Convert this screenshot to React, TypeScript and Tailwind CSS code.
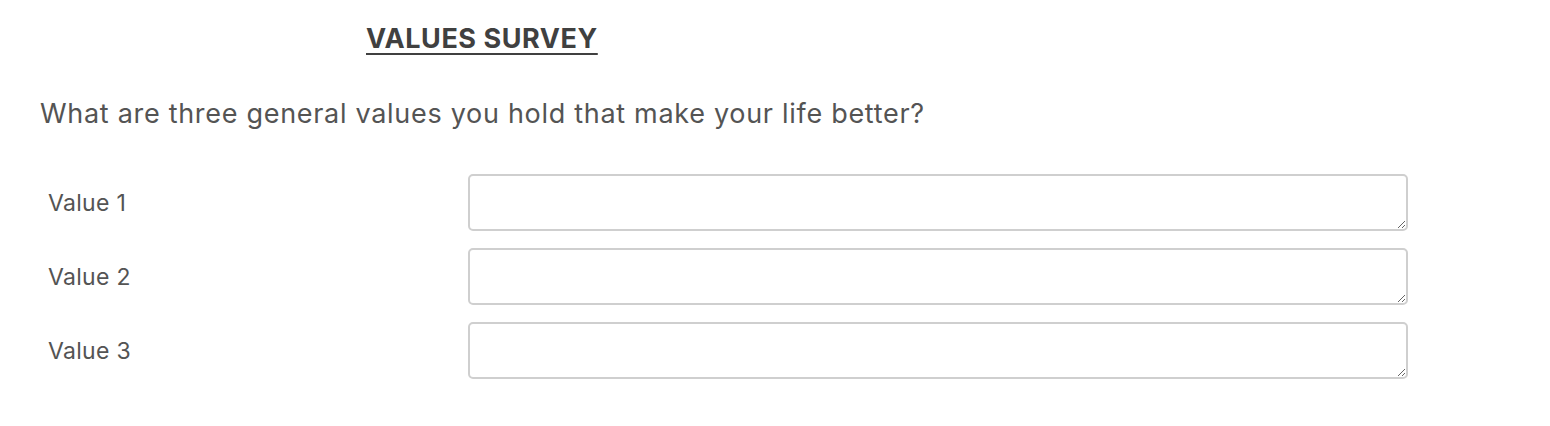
export default function App() {
  const rows = ["Value 1", "Value 2", "Value 3"];
  return (
    <div className="min-h-screen bg-white font-[family-name:Inter,sans-serif] text-[#545454]">
      <div className="pt-[22px]">
        {/* Title */}
        <h1 className="ml-[366px] inline-block text-[27px] font-bold leading-[34px] tracking-[0.55px] text-[#404040] underline decoration-2 underline-offset-[5px]">
          VALUES SURVEY
        </h1>

        {/* Question */}
        <p className="ml-[40px] mt-[42px] text-[27px] leading-[32px] tracking-[0.7px]">
          What are three general values you hold that make your life better?
        </p>

        {/* Rows */}
        <div className="ml-[40px] mt-[44px] flex flex-col gap-[17px]">
          {rows.map((label) => (
            <div key={label} className="flex items-center">
              <label className="w-[428px] pl-[8px] text-[23px] leading-[28px] tracking-[0.3px]">
                {label}
              </label>
              <textarea className="h-[57px] w-[940px] rounded-[5px] border-2 border-[#cfcfcf] bg-white outline-none" />
            </div>
          ))}
        </div>
      </div>
    </div>
  );
}
